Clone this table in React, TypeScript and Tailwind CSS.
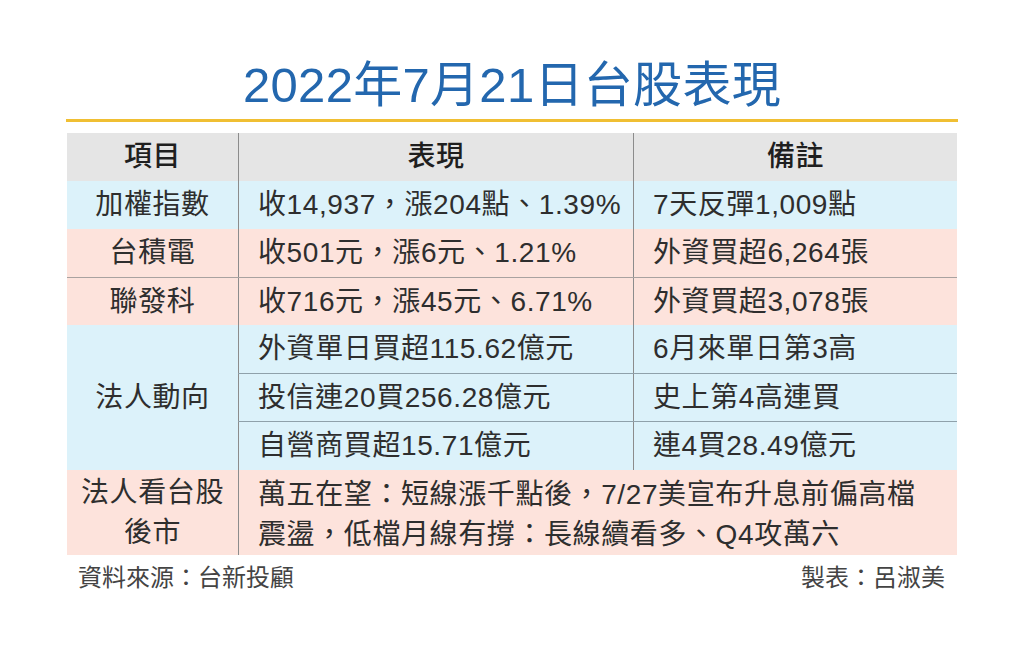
import React from "react";

const Cell1 = ({ children, className = "" }: { children: React.ReactNode; className?: string }) => (
  <div className={`w-[171px] shrink-0 flex items-center justify-center ${className}`}>{children}</div>
);
const Cell2 = ({ children, className = "" }: { children: React.ReactNode; className?: string }) => (
  <div className={`w-[395px] shrink-0 flex items-center border-l border-[#8c8c8c] pl-[19px] ${className}`}>{children}</div>
);
const Cell3 = ({ children, className = "" }: { children: React.ReactNode; className?: string }) => (
  <div className={`flex-1 flex items-center border-l border-[#8c8c8c] pl-[19px] ${className}`}>{children}</div>
);

export default function App() {
  return (
    <div className="w-[1024px] h-[667px] bg-white font-['Liberation_Sans','Noto_Sans_CJK_TC',sans-serif] text-[#2e2e2e]">
      <div className="pt-[56px] h-[114px] text-center text-[49px] leading-[58px] tracking-[0.3px] text-[#2367ae]">
        2022年7月21日台股表現
      </div>
      <div className="mt-[5px] ml-[66px] w-[892px] h-[3px] bg-[#f0bf33]" />
      <div className="mt-[11px] ml-[67px] w-[890px] text-[28px] leading-[40px] tracking-[0.6px]">
        <div className="flex h-[48px] bg-[#e5e5e5] text-[#1f1f1f] font-medium">
          <Cell1>項目</Cell1>
          <div className="w-[395px] shrink-0 flex items-center justify-center border-l border-[#8c8c8c]">表現</div>
          <div className="flex-1 flex items-center justify-center border-l border-[#8c8c8c]">備註</div>
        </div>
        <div className="flex h-[48px] bg-[#dcf2fa]">
          <Cell1>加權指數</Cell1>
          <Cell2>收14,937，漲204點、1.39%</Cell2>
          <Cell3>7天反彈1,009點</Cell3>
        </div>
        <div className="flex h-[48px] bg-[#fde3dc]">
          <Cell1>台積電</Cell1>
          <Cell2>收501元，漲6元、1.21%</Cell2>
          <Cell3>外資買超6,264張</Cell3>
        </div>
        <div className="flex h-[48px] bg-[#fde3dc] border-t border-[#a9a2a0]">
          <Cell1>聯發科</Cell1>
          <Cell2>收716元，漲45元、6.71%</Cell2>
          <Cell3>外資買超3,078張</Cell3>
        </div>
        <div className="flex h-[145px] bg-[#dcf2fa]">
          <Cell1>法人動向</Cell1>
          <div className="flex-1 flex flex-col">
            <div className="flex h-[48px]">
              <Cell2>外資單日買超115.62億元</Cell2>
              <Cell3>6月來單日第3高</Cell3>
            </div>
            <div className="flex h-[48px] border-t border-[#8fa1aa]">
              <Cell2>投信連20買256.28億元</Cell2>
              <Cell3>史上第4高連買</Cell3>
            </div>
            <div className="flex flex-1 border-t border-[#8fa1aa]">
              <Cell2>自營商買超15.71億元</Cell2>
              <Cell3>連4買28.49億元</Cell3>
            </div>
          </div>
        </div>
        <div className="flex h-[85px] bg-[#fde3dc]">
          <Cell1 className="flex-col text-center">
            <span>法人看台股</span>
            <span>後市</span>
          </Cell1>
          <div className="flex-1 flex flex-col justify-center border-l border-[#8c8c8c] pl-[19px] pt-[4px] whitespace-nowrap">
            <span>萬五在望：短線漲千點後，7/27美宣布升息前偏高檔</span>
            <span>震盪，低檔月線有撐：長線續看多、Q4攻萬六</span>
          </div>
        </div>
      </div>
      <div className="mt-[8px] ml-[67px] w-[890px] flex justify-between pl-[11px] pr-[12px] text-[24px] leading-[30px] text-[#444]">
        <span>資料來源：台新投顧</span>
        <span>製表：呂淑美</span>
      </div>
    </div>
  );
}
